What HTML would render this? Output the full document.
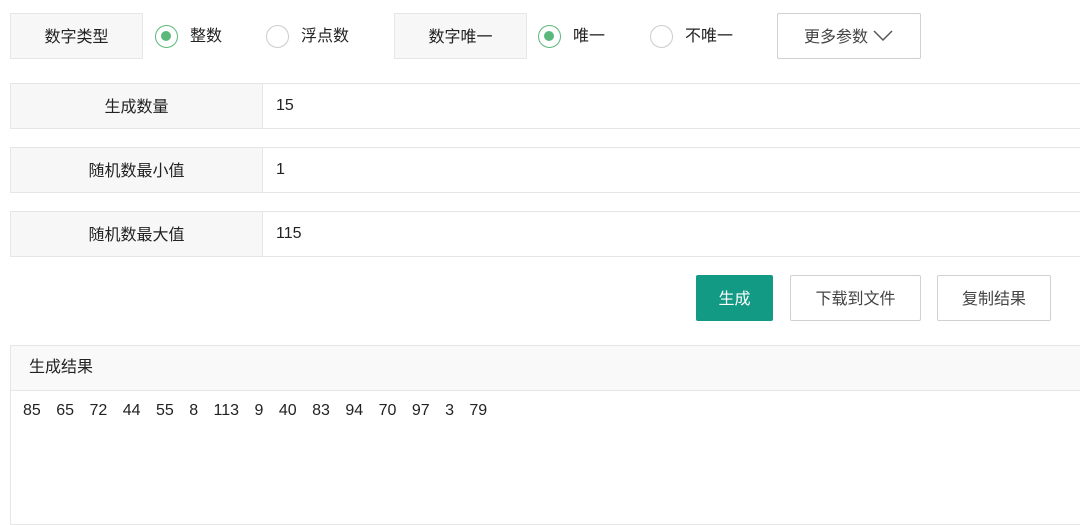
<!DOCTYPE html>
<html><head><meta charset="utf-8"><style>
body{margin:0;width:1080px;height:507px;overflow:hidden;background:#fff;font-family:"Liberation Sans","Noto Sans CJK SC",sans-serif;font-size:16px;color:#222;position:relative}
.a{position:absolute;box-sizing:border-box}
.lbl{background:#f7f7f7;border:1px solid #e6e6e6;display:flex;align-items:center;justify-content:center;color:#222;padding-bottom:2px}
.rad{width:23px;height:23px;border-radius:50%;border:1.5px solid #ccc;background:#fff}
.rad.on{border-color:#5cb87a}
.rad.on::after{content:"";position:absolute;left:5px;top:5px;width:10px;height:10px;border-radius:50%;background:#5cb87a}
.t{line-height:20px}
.btn{background:#fff;border:1px solid #d0d0d0;border-radius:2px;display:flex;align-items:center;justify-content:center;color:#444;padding-bottom:2px}
.row{border:1px solid #e6e6e6;left:10px;width:1090px;height:46px}
.row .l{position:absolute;left:0;top:0;width:252px;height:44px;background:#f7f7f7;border-right:1px solid #e6e6e6;display:flex;align-items:center;justify-content:center;padding-bottom:3px;box-sizing:border-box}
.row .v{position:absolute;left:265px;top:12px;line-height:20px}
</style></head><body>
<div class="a lbl" style="left:10px;top:13px;width:133px;height:46px">数字类型</div>
<div class="a rad on" style="left:155px;top:25px"></div><div class="a t" style="left:190px;top:27px">整数</div>
<div class="a rad" style="left:266px;top:25px"></div><div class="a t" style="left:301px;top:27px">浮点数</div>
<div class="a lbl" style="left:394px;top:13px;width:133px;height:46px">数字唯一</div>
<div class="a rad on" style="left:538px;top:25px"></div><div class="a t" style="left:573px;top:27px">唯一</div>
<div class="a rad" style="left:650px;top:25px"></div><div class="a t" style="left:685px;top:27px">不唯一</div>
<div class="a btn" style="left:777px;top:13px;width:144px;height:46px">更多参数 <svg width="22" height="14" viewBox="0 0 22 14" style="margin-left:4px"><path d="M2 3 L11 12 L20 3" fill="none" stroke="#555" stroke-width="1.5"/></svg></div>
<div class="a row" style="top:83px"><div class="l">生成数量</div><div class="v">15</div></div>
<div class="a row" style="top:147px"><div class="l">随机数最小值</div><div class="v">1</div></div>
<div class="a row" style="top:211px"><div class="l">随机数最大值</div><div class="v">115</div></div>
<div class="a btn" style="left:696px;top:275px;width:77px;height:46px;background:#139a84;border-color:#139a84;color:#fff">生成</div>
<div class="a btn" style="left:790px;top:275px;width:131px;height:46px">下载到文件</div>
<div class="a btn" style="left:937px;top:275px;width:114px;height:46px">复制结果</div>
<div class="a" style="left:10px;top:345px;width:1090px;height:180px;border:1px solid #e6e6e6">
<div style="height:44px;background:#f9f9f9;border-bottom:1px solid #e6e6e6;padding-left:18px;line-height:44px">生成结果</div>
<div style="padding:10px 0 0 12px;line-height:20px;word-spacing:11px">85 65 72 44 55 8 113 9 40 83 94 70 97 3 79</div>
</div>
</body></html>
